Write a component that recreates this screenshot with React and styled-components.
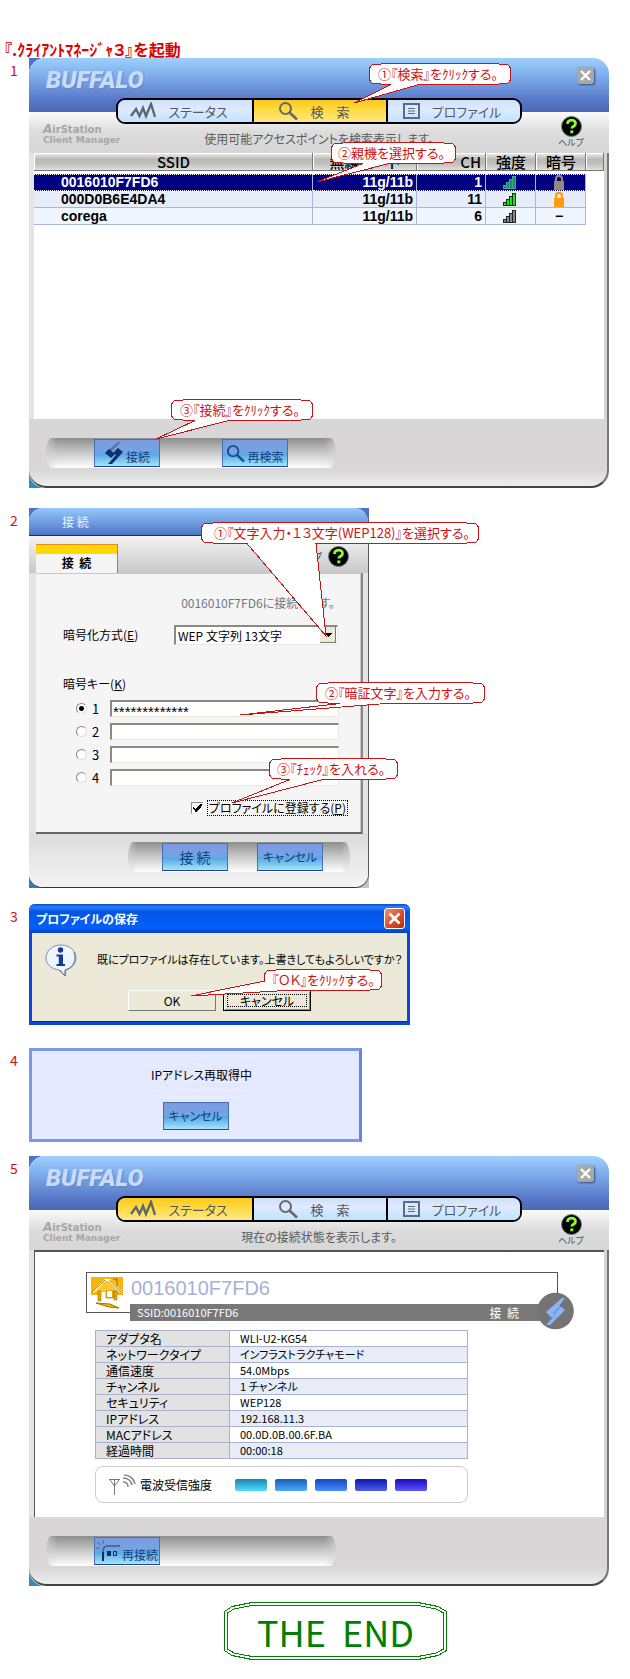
import React from "react";
import styled, { createGlobalStyle, css } from "styled-components";

const Global = createGlobalStyle`
  * { box-sizing: border-box; }
  body { margin: 0; background: #fff; }
  body, button, input, select {
    font-family: "Noto Sans CJK JP", "Liberation Sans", sans-serif;
    font-feature-settings: "palt";
  }
`;

/* ---------- page ---------- */

const Page = styled.main`
  padding: 40px 21px 20px 0;
  color: #000;
  font-size: 12px;
  line-height: 16px;
`;
const Title = styled.h1`
  margin: 0;
  padding-left: 4px;
  height: 18px;
  color: #e00000;
  font-size: 16px;
  line-height: 18px;
  white-space: nowrap;
`;
const StepRow = styled.section`
  display: flex;
  align-items: flex-start;
  margin-top: ${(p) => p.$gap || 0}px;
`;
const StepNumber = styled.span`
  flex: 0 0 29px;
  padding: 2px 0 0 10px;
  color: #d01010;
  font-size: 14px;
  line-height: 20px;
`;
const StepBody = styled.div`
  position: relative;
  flex: 1 1 auto;
  min-width: 0;
  max-width: ${(p) => (p.$max ? `${p.$max}px` : "none")};
`;

/* ---------- callouts ---------- */

const CalloutBox = styled.div`
  position: absolute;
  z-index: 5;
  left: ${(p) => p.$left};
  top: ${(p) => p.$top}px;
  width: ${(p) => p.$width}px;
  height: 22px;
  padding-left: ${(p) => p.$pad}px;
  color: #d01010;
  font-size: 13px;
  line-height: 22px;
  white-space: nowrap;
  pointer-events: none;
`;
const CalloutShape = styled.svg`
  position: absolute;
  left: 0;
  top: 0;
  overflow: visible;
  shape-rendering: crispEdges;
`;
const CalloutText = styled.span`
  position: relative;
`;

function Callout({ left, top, width, pad = 9, tip, base, side, children }) {
  const w = width;
  const [tx, ty] = tip;
  const tail = side
    ? `H${base[1]} L${tx} ${ty} L0.5 12`
    : `H${base[1]} L${tx} ${ty} L${base[0]} 21.5 H16 L3 20 L0.5 17`;
  const d = `M0.5 5 L3 2 L16 0.5 H${w - 16} L${w - 3} 2 L${w - 0.5} 5 V17 L${w - 3} 20 L${w - 16} 21.5 ${tail} Z`;
  return (
    <CalloutBox $left={left} $top={top} $width={w} $pad={pad}>
      <CalloutShape width={w} height="22" aria-hidden="true">
        <path d={d} fill="#fff" stroke="#c81414" />
      </CalloutShape>
      <CalloutText>{children}</CalloutText>
    </CalloutBox>
  );
}

/* ---------- client manager window ---------- */

const Shell = styled.div`
  background:
    linear-gradient(#4a74cc, #4a74cc) 0 0 / 16px 16px no-repeat,
    linear-gradient(#2f8fb8, #2f8fb8) 0 100% / 12px 18px no-repeat;
`;
const ShellInner = styled.div`
  overflow: hidden;
  border-radius: 16px;
  background: #dcdcdc;
`;
const Header = styled.header`
  display: grid;
  grid-template-columns: 87px 1fr 87px;
  grid-template-rows: 40px 26px 29px;
  background:
    linear-gradient(#9fd0fc 0, #84b4f0 14px, #6f97dc 28px, #5878c8 42px, #4a68b4 54px) 0 0 / 100% 54px no-repeat,
    linear-gradient(#fbfbfb 54px, #dcdcdc 74px, #d6d6d6);
`;
const Logo = styled.div`
  grid-column: 1 / 3;
  grid-row: 1;
  padding: 8px 0 0 17px;
  color: #c8dcfa;
  font: italic 900 24px/28px Roboto, "Liberation Sans", sans-serif;
  text-shadow: 1px 1px 1px #5f86cc;
`;
const CloseButton = styled.button`
  grid-column: 3;
  grid-row: 1;
  justify-self: end;
  width: 17px;
  height: 17px;
  margin: 9px 15px 0 0;
  padding: 0;
  border: 0;
  border-radius: 3px;
  background: #a8a8a8;
  box-shadow: 1px 1px 2px #334a88;
  svg { display: block; }
`;
const Tabs = styled.nav`
  grid-column: 2;
  grid-row: 2;
  display: grid;
  grid-template-columns: repeat(3, 1fr);
  border: 2px solid #000;
  border-radius: 9px;
  overflow: hidden;
`;
const Tab = styled.button`
  display: flex;
  align-items: center;
  justify-content: center;
  gap: 12px;
  padding: 0 12px 0 0;
  border: 0;
  border-left: 2px solid #000;
  color: #505860;
  font-size: 13px;
  white-space: pre;
  background: ${(p) =>
    p.$active
      ? "linear-gradient(#fcc81c, #ffd93c 40%, #ffe888)"
      : "linear-gradient(#cfe0fb, #dfeaff 40%, #bfe4ff)"};
  &:first-child { border-left: 0; }
  &:last-child { padding-right: 4px; }
`;
const Product = styled.div`
  grid-column: 1;
  grid-row: 3;
  padding: 0 0 0 14px;
  color: #a6a6a6;
  font: bold 9px/10px "DejaVu Sans", sans-serif;
  white-space: nowrap;
`;
const ProductName = styled.div`
  font-size: 10px;
  i { font-size: 12px; }
`;
const Message = styled.p`
  grid-column: 2;
  grid-row: 3;
  margin: 0;
  padding-top: 6px;
  color: #5a5a5a;
  font-size: 12px;
  line-height: 18px;
  text-align: center;
`;
const HelpLink = styled.a`
  grid-column: 3;
  grid-row: 2 / 4;
  justify-self: end;
  display: flex;
  flex-direction: column;
  align-items: center;
  width: 34px;
  margin: 18px 21px 0 0;
  color: #505050;
  font-size: 9px;
  line-height: 12px;
  text-decoration: none;
`;
const Body = styled.div`
  min-height: ${(p) => (p.$status ? 267 : 266)}px;
  margin: 0 3px 0 5px;
  background: #fff;
  box-shadow: 3px 0 0 #d4d4d4, 5px 0 0 #777;
  ${(p) =>
    p.$status &&
    css`
      margin-top: -1px;
      padding: 20px 30px 12px 51px;
      border-top: 2px solid #555;
      border-left: 1px solid #555;
    `}
`;
const ShellMiddle = styled.div`
  padding-right: 2px;
  background: linear-gradient(to right, #e4e4e4, #dcdcdc 98%, #777);
`;
const Footer = styled.footer`
  height: 69px;
  padding: 19px 0 0 17px;
  border-right: 2px solid #777;
  border-bottom: 2px solid #444;
  border-radius: 0 0 18px 18px;
  background: linear-gradient(#d8d6d7 50px, #eee);
`;
const Tray = styled.div`
  display: flex;
  gap: ${(p) => p.$gap}px;
  width: ${(p) => p.$width}px;
  height: 30px;
  padding: 1px 0 1px ${(p) => p.$pad}px;
  border-radius: 6px / 16px;
  background:
    linear-gradient(to right, rgba(216, 214, 215, 0.6), transparent 4%, transparent 96%, rgba(216, 214, 215, 0.6)),
    linear-gradient(#8e8e8e, #c4c4c4 45%, #fff);
`;
const SkinButton = styled.button`
  display: flex;
  align-items: center;
  justify-content: center;
  gap: 2px;
  width: 66px;
  height: 28px;
  padding: ${(p) => (p.$low ? "8px 0 0" : "0")};
  border: 1px solid #4470b4;
  border-bottom-color: #1d4a8c;
  color: #123f80;
  font-size: ${(p) => (p.$large ? 14 : 12)}px;
  line-height: 16px;
  white-space: pre;
  background: linear-gradient(#7c9ae0, #74a4e4 45%, #58a8e4 55%, #a4e4fc);
  svg { flex: none; margin-top: ${(p) => (p.$low ? -8 : 0)}px; }
`;

/* ---------- access point list ---------- */

const ApTable = styled.table`
  width: 100%;
  table-layout: fixed;
  border-collapse: separate;
  border-spacing: 0;
  font-weight: bold;
`;
const ApCol = styled.col`
  width: ${(p) => (p.$w ? `${p.$w}px` : "auto")};
`;
const ApHead = styled.th`
  height: 21px;
  padding: 0 5px;
  border-bottom: 3px solid #fff;
  background: linear-gradient(#f0f0ec, #b8b8b6 35%, #c0c0be 60%, #e4e4e0) padding-box;
  box-shadow: inset -1px -1px 0 #777, inset 1px 1px 0 #fff;
  font-size: 15px;
  font-weight: 500;
  line-height: 18px;
  text-align: ${(p) => p.$align || "center"};
  white-space: nowrap;
`;
const ApCell = styled.td`
  height: 17px;
  padding: ${(p) => (p.$name ? "0 0 0 27px" : "0 3px 0 0")};
  border-right: 1px solid #aab6dc;
  border-bottom: 1px solid #aab6dc;
  font: bold 14px/16px "Liberation Sans", sans-serif;
  text-align: ${(p) => (p.$name ? "left" : p.$center ? "center" : "right")};
  svg { display: block; margin: 0 auto; }
`;
const ApRow = styled.tr`
  color: ${(p) => (p.$selected ? "#fff" : "#000")};
  td {
    background: ${(p) => (p.$selected ? "#000080" : p.$alt ? "#f0f6ff" : "#e6ecf8")};
    ${(p) => p.$selected && "border-top: 1px dotted #fff; border-bottom: 1px dotted #fff; line-height: 15px;"}
  }
  td:last-child { background: #fff; border: 0; }
`;

/* ---------- connection dialog ---------- */

const Dialog = styled.div`
  background:
    linear-gradient(#4a74cc, #4a74cc) 0 0 / 100% 14px no-repeat,
    linear-gradient(#2f7fb0, #2f7fb0) 0 100% / 12px 12px no-repeat,
    linear-gradient(#c4c4c4, #c4c4c4) 100% 100% / 12px 12px no-repeat;
`;
const DialogInner = styled.div`
  overflow: hidden;
  border-right: 1px solid #555;
  border-bottom: 1px solid #333;
  border-radius: 14px;
  background: #e4e4e4;
`;
const DialogTitle = styled.h2`
  height: 28px;
  margin: 0;
  padding-left: 33px;
  border-bottom: 1px solid #1c2c5c;
  color: #e8f2ff;
  font-size: 12px;
  font-weight: 400;
  line-height: 27px;
  white-space: pre;
  background: linear-gradient(#94c8fc, #5076c8);
`;
const DialogTop = styled.div`
  display: flex;
  align-items: flex-end;
  justify-content: space-between;
  height: 37px;
  padding-left: 7px;
  background: linear-gradient(#f4f4f4, #c8c8c8);
`;
const DialogTab = styled.div`
  width: 82px;
  height: 29px;
  padding-top: 9px;
  border-top: 1px solid #e88c20;
  border-right: 1px solid #888;
  font-size: 12px;
  font-weight: bold;
  line-height: 18px;
  text-align: center;
  white-space: pre;
  background: linear-gradient(#ffd800 9px, #f5f5f5 9px);
`;
const DialogHelp = styled.a`
  display: flex;
  align-items: center;
  gap: 6px;
  padding: 0 19px 6px 0;
  color: #404040;
  font-size: 9px;
  line-height: 20px;
  text-decoration: none;
`;
const Sheet = styled.form`
  margin: 0 5px 0 7px;
  height: 261px;
  border-right: 2px solid #888;
  border-bottom: 2px solid #666;
  background: #f5f5f5;
  box-shadow: inset -1px 1px 0 #c8c8c8;
`;
const SheetNote = styled.p`
  margin: 0;
  padding: 20px 26px 0 0;
  height: 52px;
  color: #6c7888;
  font-size: 12px;
  line-height: 20px;
  text-align: right;
`;
const MethodRow = styled.div`
  display: grid;
  grid-template-columns: 111px 164px;
  align-items: center;
  padding-left: 27px;
  height: 20px;
`;
const SelectWrap = styled.div`
  display: grid;
  > * { grid-area: 1 / 1; }
  svg { justify-self: end; align-self: center; margin-right: 2px; pointer-events: none; }
`;
const sunken = css`
  border: 1px solid #eceadc;
  border-top: 2px solid #8c8a80;
  border-left: 2px solid #8c8a80;
  border-radius: 0;
  background: #fff;
`;
const Select = styled.select`
  appearance: none;
  width: 100%;
  height: 20px;
  padding: 0 18px 0 2px;
  ${sunken}
  color: #000;
  font-size: 12px;
  line-height: 16px;
`;
const KeyTitle = styled.div`
  padding: 30px 0 4px 27px;
  line-height: 18px;
`;
const KeyRow = styled.div`
  display: flex;
  align-items: center;
  height: 23px;
  padding-left: 40px;
`;
const Radio = styled.input`
  appearance: none;
  width: 11px;
  height: 11px;
  margin: 0;
  border: 1px solid #888;
  border-right-color: #ddd;
  border-bottom-color: #ddd;
  border-radius: 50%;
  background: #fff;
  &:checked { background: radial-gradient(#000 2px, #fff 3px); }
`;
const KeyLabel = styled.label`
  width: 23px;
  padding-left: 5px;
  font-size: 13px;
`;
const KeyInput = styled.input`
  width: 229px;
  height: 17px;
  padding: 4px 1px 0;
  ${sunken}
  font: 15px/12px "Liberation Sans", sans-serif;
`;
const CheckRow = styled.div`
  display: flex;
  align-items: center;
  justify-content: flex-end;
  gap: 5px;
  padding: 12px 14px 0 0;
`;
const CheckBox = styled.input`
  appearance: none;
  width: 12px;
  height: 12px;
  margin: 0;
  ${sunken}
  border-width: 1px;
  &:checked {
    background:
      linear-gradient(45deg, transparent 38%, #000 38%, #000 56%, transparent 56%) 1px 4px / 4px 5px no-repeat,
      linear-gradient(-45deg, transparent 40%, #000 40%, #000 62%, transparent 62%) 3px 1px / 7px 8px no-repeat,
      #fff;
  }
`;
const CheckLabel = styled.label`
  outline: 1px dotted #000;
  padding: 0 1px;
  line-height: 14px;
`;
const DialogFooter = styled.footer`
  height: 53px;
  padding: 8px 0 0 99px;
  background: linear-gradient(#dcdcdc, #f4f4f4);
`;

/* ---------- message box ---------- */

const XpWindow = styled.div`
  border: 3px solid #0a48d8;
  border-top: 0;
  border-radius: 6px 6px 0 0;
  background: #ece9d8;
  box-shadow: inset 0 -1px 0 #003080;
`;
const XpTitle = styled.header`
  display: flex;
  align-items: center;
  justify-content: space-between;
  height: 29px;
  margin: 0 -3px;
  padding: 0 5px 0 7px;
  border-radius: 6px 6px 0 0;
  color: #fff;
  font-size: 12px;
  font-weight: bold;
  background: linear-gradient(#0848c8, #2c80ff 3px, #0454e4 8px, #0460fc 24px, #0440b8);
`;
const XpClose = styled.button`
  width: 21px;
  height: 21px;
  padding: 0;
  border: 1px solid #fff;
  border-radius: 3px;
  background: linear-gradient(135deg, #f09070, #d84820 60%, #b83010);
  svg { display: block; }
`;
const XpMessage = styled.div`
  display: flex;
  align-items: flex-start;
  gap: 20px;
  height: 57px;
  padding: 11px 0 0 12px;
  svg { flex: none; }
  p { margin: 0; padding-top: 6px; font-size: 11px; line-height: 18px; white-space: nowrap; }
`;
const XpButtons = styled.div`
  display: flex;
  gap: 7px;
  padding: 0 0 11px 96px;
`;
const XpButton = styled.button`
  width: 88px;
  height: 21px;
  padding: 0;
  border: 1px solid #fff;
  border-right-color: #777;
  border-bottom-color: #777;
  color: #000;
  font-size: 12px;
  line-height: 16px;
  background: #ece9d8;
  ${(p) =>
    p.$focused &&
    css`
      border-color: #000;
      box-shadow: inset 1px 1px 0 #fff, inset -1px -1px 0 #888;
      outline: 1px dotted #000;
      outline-offset: -5px;
    `}
`;

/* ---------- renewing address ---------- */

const Renewing = styled.div`
  display: flex;
  flex-direction: column;
  align-items: center;
  gap: 18px;
  padding: 15px 0 9px;
  border: 3px solid #7898e8;
  border-right-color: #6484e4;
  background: repeating-linear-gradient(#e2e8fd 0 4px, #e6ebff 4px 8px);
  p { margin: 0; padding-left: 12px; line-height: 18px; font-size: 12px; }
`;

/* ---------- status ---------- */

const NetworkCard = styled.div`
  display: flex;
  gap: 8px;
  height: 41px;
  margin-right: 16px;
  padding: 4px;
  border: 1px solid #555;
`;
const NetworkName = styled.div`
  color: #a8b0d8;
  font: 20px/22px "Liberation Sans", sans-serif;
`;
const NetworkBar = styled.div`
  position: relative;
  display: flex;
  justify-content: space-between;
  height: 17px;
  margin: -9px 29px 9px 44px;
  padding: 0 26px 0 7px;
  color: #fff;
  font-size: 12px;
  line-height: 17px;
  white-space: pre;
  background: #787878;
  small { font-size: 11px; }
`;
const LinkBadge = styled.svg`
  position: absolute;
  right: -29px;
  top: -12px;
`;
const InfoTable = styled.table`
  width: 373px;
  max-width: 100%;
  margin-left: 9px;
  border-collapse: collapse;
  table-layout: fixed;
  font-size: 12px;
  line-height: 15px;
  th, td { height: 16px; padding: 0 0 0 10px; border: 1px solid #aab0d0; text-align: left; font-weight: 400; }
  th { width: 134px; background: #e2e2e2; }
  tr:nth-child(even) td { background: #e6ecf8; }
  td { font-size: 11px; }
`;
const SignalBox = styled.div`
  display: flex;
  align-items: center;
  width: 373px;
  max-width: 100%;
  height: 37px;
  margin: 7px 0 0 9px;
  padding-left: 12px;
  border: 1px solid #ccc;
  border-radius: 8px;
  span { width: 98px; padding-left: 3px; }
`;
const SignalBars = styled.div`
  display: flex;
  gap: 8px;
`;
const SignalBar = styled.i`
  width: 32px;
  height: 12px;
  border-radius: 2px;
  background: linear-gradient(${(p) => p.$dark}, ${(p) => p.$light});
`;

/* ---------- closing ---------- */

const Ending = styled.footer`
  display: flex;
  justify-content: center;
  margin-top: 16px;
  padding-left: 62px;
`;
const EndFrame = styled.div`
  display: grid;
  width: 223px;
  height: 58px;
  > * { grid-area: 1 / 1; }
  svg { shape-rendering: crispEdges; }
  strong {
    place-self: center;
    color: #008000;
    font-size: 36px;
    font-weight: 400;
    line-height: 56px;
    white-space: pre;
  }
`;

/* ---------- drawings ---------- */

const Cross = ({ size }) => (
  <svg width={size} height={size} viewBox="0 0 17 17" aria-hidden="true">
    <path d="M4 4l9 9M13 4l-9 9" stroke="#fff" strokeWidth="2.4" />
  </svg>
);
const Wave = () => (
  <svg width="26" height="18" viewBox="0 0 26 18" aria-hidden="true">
    <path d="M1 14L6 7l3.500 7 3.500-8 3 8 5-12 4 13" fill="none" stroke="#5c6870" strokeWidth="2.400" />
  </svg>
);
const Lens = ({ size = 20, color = "#66686a" }) => (
  <svg width={size} height={size} viewBox="0 0 20 20" aria-hidden="true">
    <circle cx="7.500" cy="7.500" r="5.500" fill="none" stroke={color} strokeWidth="2" />
    <path d="M11.500 11.500L19 18.500" stroke={color} strokeWidth="2.600" />
  </svg>
);
const Sheets = () => (
  <svg width="17" height="16" viewBox="0 0 17 16" aria-hidden="true">
    <path d="M1 1h15v14H1z" fill="none" stroke="#5a6c80" strokeWidth="2" />
    <path d="M5 5.500h7M5 8h7M5 10.500h7" stroke="#5a6c80" />
  </svg>
);
const HelpMark = () => (
  <svg width="21" height="21" viewBox="0 0 21 21" aria-hidden="true">
    <circle cx="10.500" cy="10.500" r="10" fill="#000" stroke="#777" />
    <path d="M6.500 8c0-5 8-5 8-.5 0 3-3.500 2.500-3.700 5" fill="none" stroke="#8f2" strokeWidth="2.800" />
    <path d="M9.300 14.500h3v2.800h-3z" fill="#8f2" />
  </svg>
);
const LinkMark = () => (
  <svg width="20" height="22" viewBox="0 0 20 22" aria-hidden="true">
    <path d="M14 0h3L9 8l-3 3-4-1z" fill="#60769a" />
    <path d="M1 11l4-4 6 5-4 4z" fill="#0c3070" />
    <path d="M12 8l2-2 5 4-11 12H4l8-9-3-2z" fill="#0c3070" />
  </svg>
);
const Reconnect = () => (
  <svg width="24" height="24" viewBox="0 0 24 24" aria-hidden="true">
    <path d="M7 22V12c0-3 2-5 5-5h12" fill="none" stroke="#4a6a98" strokeWidth="2" />
    <path d="M7 22V13" stroke="#0c2c60" strokeWidth="2" />
    <path d="M1 3l4 3M7 1v4M0 9h4" stroke="#4a6a98" />
    <path d="M11 12h4v5h-4z" fill="#0c2c60" />
    <path d="M17.500 12.500h3v4h-3z" fill="none" stroke="#0c2c60" />
  </svg>
);
const Bars = ({ fill, line }) => (
  <svg width="13" height="13" viewBox="0 0 13 13" shapeRendering="crispEdges" aria-hidden="true">
    <path d="M.5 9.500h3v3h-3zM3.500 6.500h3v6h-3zM6.500 3.500h3v9h-3zM9.500 .5h3v12h-3z" fill={fill} stroke={line} />
  </svg>
);
const Lock = ({ color }) => (
  <svg width="12" height="15" viewBox="0 0 12 15" aria-hidden="true">
    <path d="M3 7V3.500c0-3.500 6-3.500 6 0V7" fill="none" stroke={color} strokeWidth="2" />
    <path d="M1 6h10v9H1z" fill={color} />
  </svg>
);
const DropArrow = () => (
  <svg width="16" height="16" viewBox="0 0 16 16" shapeRendering="crispEdges" aria-hidden="true">
    <path d="M0 0h16v16H0z" fill="#ece9d8" />
    <path d="M15.500 0v15.500H0" fill="none" stroke="#777" />
    <path d="M5 6h7L8.500 10z" />
  </svg>
);
const InfoMark = () => (
  <svg width="33" height="33" viewBox="0 0 33 33" aria-hidden="true">
    <path d="M17 1c9 0 15 6 15 13 0 6-4 10-10 12l-1 6-6-6C7 25 2 20 2 14 2 7 8 1 17 1z" fill="#f0f4fc" stroke="#7890b8" />
    <path d="M30 8c3 8-1 16-9 18l0 6-5-6" fill="none" stroke="#5c6c94" />
    <circle cx="16.500" cy="6" r="2.700" fill="#103c98" />
    <path d="M12.500 10.500h6.500v9.500h2v2h-8.500v-2h2.300v-7.500h-2.300z" fill="#103c98" />
  </svg>
);
const House = () => (
  <svg width="32" height="32" viewBox="0 0 32 32" aria-hidden="true">
    <path d="M0 0h32v18H0z" fill="#f8b408" />
    <path d="M7 14h18v9H7z" fill="#fff" />
    <path d="M2 15L14 3h5l11 12" fill="#fcc830" stroke="#fff" strokeWidth="2" />
    <path d="M1 15L14 3M19 3l11 12M22 2h4v7" fill="none" stroke="#9c7408" />
    <path d="M7 14h3v10H7zM23 14h3v9h-3zM15 14h8v7h-8z" fill="#e8a808" stroke="#9c7408" strokeWidth=".6" />
    <path d="M16 14h5v6h-5z" fill="#fff" />
    <path d="M5 26l14 1 9 4-10-1z" fill="#f8b408" stroke="#9c7408" />
  </svg>
);
const Antenna = () => (
  <svg width="29" height="24" viewBox="0 0 29 24" aria-hidden="true">
    <path d="M6.500 6v16M1 6.500h11M2 7l4.500 6L11 7" fill="none" stroke="#777" />
    <path d="M15 9c3 0 5 2 5 5M15 5c5 0 8 3 9 7M16 2c6 0 10 4 11 9" fill="none" stroke="#888" strokeWidth="1.600" />
  </svg>
);

/* ---------- composed parts ---------- */

const tabs = [
  ["status", "ステータス", <Wave key="w" />],
  ["search", "検　索", <Lens key="l" />],
  ["profile", "プロファイル", <Sheets key="s" />],
];

function ManagerWindow({ active, message, status, tray, children }) {
  return (
    <Shell>
      <ShellInner>
        <Header>
          <Logo>BUFFALO</Logo>
          <CloseButton aria-label="閉じる"><Cross size={17} /></CloseButton>
          <Tabs>
            {tabs.map(([id, label, icon]) => (
              <Tab key={id} $active={id === active}>{icon}{label}</Tab>
            ))}
          </Tabs>
          <Product>
            <ProductName><i>A</i>irStation</ProductName>
            Client Manager
          </Product>
          <Message>{message}</Message>
          <HelpLink href="#help"><HelpMark />ヘルプ</HelpLink>
        </Header>
        <ShellMiddle>
          <Body $status={status}>{children}</Body>
        </ShellMiddle>
        <Footer>
          <Tray $width={290} $gap={62} $pad={48}>{tray}</Tray>
        </Footer>
      </ShellInner>
    </Shell>
  );
}

const points = [
  { ssid: "0016010F7FD6", mode: "11g/11b", ch: 1, bars: ["#208870", "#40a890"], lock: "#988878" },
  { ssid: "000D0B6E4DA4", mode: "11g/11b", ch: 11, bars: ["#20e020", "#103010"], lock: "#ff9c08" },
  { ssid: "corega", mode: "11g/11b", ch: 6, bars: ["#888", "#222"], lock: null },
];

const info = [
  ["アダプタ名", "WLI-U2-KG54"],
  ["ネットワークタイプ", "インフラストラクチャモード"],
  ["通信速度", "54.0Mbps"],
  ["チャンネル", "1 チャンネル"],
  ["セキュリティ", "WEP128"],
  ["IPアドレス", "192.168.11.3"],
  ["MACアドレス", "00.0D.0B.00.6F.BA"],
  ["経過時間", "00:00:18"],
];

const strength = [
  ["#1884b0", "#50dcff"],
  ["#1460b8", "#50a8ff"],
  ["#1048c0", "#4c8cff"],
  ["#0c18b0", "#4c5cf0"],
  ["#2008c0", "#5858f8"],
];

export default function App() {
  return (
    <Page>
      <Global />
      <Title>『.ｸﾗｲｱﾝﾄﾏﾈｰｼﾞｬ３』を起動</Title>

      <StepRow>
        <StepNumber>1</StepNumber>
        <StepBody>
          <ManagerWindow
            active="search"
            message="使用可能アクセスポイントを検索表示します。"
            tray={
              <>
                <SkinButton $low><LinkMark />接続</SkinButton>
                <SkinButton $low><Lens size={19} color="#1c4c90" />再検索</SkinButton>
              </>
            }
          >
            <ApTable>
              <colgroup>
                <ApCol />
                <ApCol $w={104} />
                <ApCol $w={69} />
                <ApCol $w={50} />
                <ApCol $w={50} />
                <ApCol $w={18} />
              </colgroup>
              <thead>
                <tr>
                  <ApHead>SSID</ApHead>
                  <ApHead>無線モード</ApHead>
                  <ApHead $align="right">CH</ApHead>
                  <ApHead>強度</ApHead>
                  <ApHead>暗号</ApHead>
                  <ApHead aria-hidden="true" />
                </tr>
              </thead>
              <tbody>
                {points.map((p, i) => (
                  <ApRow key={p.ssid} $selected={i === 0} $alt={i === 2}>
                    <ApCell $name>{p.ssid}</ApCell>
                    <ApCell>{p.mode}</ApCell>
                    <ApCell>{p.ch}</ApCell>
                    <ApCell $center><Bars fill={p.bars[0]} line={p.bars[1]} /></ApCell>
                    <ApCell $center>{p.lock ? <Lock color={p.lock} /> : "−"}</ApCell>
                    <ApCell />
                  </ApRow>
                ))}
              </tbody>
            </ApTable>
          </ManagerWindow>
          <Callout left="calc(50% + 50px)" top={5} width={142} tip={[-15, 40]} base={[22, 50]}>
            ①『検索』をｸﾘｯｸする。
          </Callout>
          <Callout left="calc(50% + 12px)" top={84} width={125} pad={7} tip={[-14, 40]} base={[32, 58]}>
            ②親機を選択する。
          </Callout>
          <Callout left="142px" top={341} width={142} tip={[-15, 40]} base={[24, 58]}>
            ③『接続』をｸﾘｯｸする。
          </Callout>
        </StepBody>
      </StepRow>

      <StepRow $gap={20}>
        <StepNumber>2</StepNumber>
        <StepBody $max={340}>
          <Dialog>
            <DialogInner>
              <DialogTitle>接 続</DialogTitle>
              <DialogTop>
                <DialogTab>接  続</DialogTab>
                <DialogHelp href="#help">ヘルプ<HelpMark /></DialogHelp>
              </DialogTop>
              <Sheet>
                <SheetNote>0016010F7FD6に接続します。</SheetNote>
                <MethodRow>
                  <label htmlFor="method">暗号化方式(<u>E</u>)</label>
                  <SelectWrap>
                    <Select id="method"><option>WEP 文字列 13文字</option></Select>
                    <DropArrow />
                  </SelectWrap>
                </MethodRow>
                <KeyTitle>暗号キー(<u>K</u>)</KeyTitle>
                {[1, 2, 3, 4].map((n) => (
                  <KeyRow key={n}>
                    <Radio type="radio" name="key" id={`key${n}`} defaultChecked={n === 1} />
                    <KeyLabel htmlFor={`key${n}`}>{n}</KeyLabel>
                    <KeyInput aria-label={`暗号キー ${n}`} defaultValue={n === 1 ? "*************" : ""} />
                  </KeyRow>
                ))}
                <CheckRow>
                  <CheckBox type="checkbox" id="save" defaultChecked />
                  <CheckLabel htmlFor="save">プロファイルに登録する(<u>P</u>)</CheckLabel>
                </CheckRow>
              </Sheet>
              <DialogFooter>
                <Tray $width={222} $gap={29} $pad={34}>
                  <SkinButton $large>接 続</SkinButton>
                  <SkinButton>キャンセル</SkinButton>
                </Tray>
              </DialogFooter>
            </DialogInner>
          </Dialog>
          <Callout left="172px" top={14} width={278} pad={13} tip={[125, 114]} base={[46, 115]}>
            ①『文字入力・１３文字(WEP128)』を選択する。
          </Callout>
          <Callout left="287px" top={174} width={169} tip={[-76, 33]} base={[24, 70]}>
            ②『暗証文字』を入力する。
          </Callout>
          <Callout left="240px" top={250} width={129} pad={8} tip={[-37, 45]} base={[21, 54]}>
            ③『ﾁｪｯｸ』を入れる。
          </Callout>
        </StepBody>
      </StepRow>

      <StepRow $gap={16}>
        <StepNumber>3</StepNumber>
        <StepBody $max={381}>
          <XpWindow>
            <XpTitle>
              プロファイルの保存
              <XpClose aria-label="閉じる"><Cross size={19} /></XpClose>
            </XpTitle>
            <XpMessage>
              <InfoMark />
              <p>既にプロファイルは存在しています。上書きしてもよろしいですか？</p>
            </XpMessage>
            <XpButtons>
              <XpButton>OK</XpButton>
              <XpButton $focused>キャンセル</XpButton>
            </XpButtons>
          </XpWindow>
          <Callout side left="235px" top={65} width={118} pad={8} tip={[-73, 27]} base={[0, 22]}>
            『ＯＫ』をｸﾘｯｸする。
          </Callout>
        </StepBody>
      </StepRow>

      <StepRow $gap={23}>
        <StepNumber>4</StepNumber>
        <StepBody $max={333}>
          <Renewing>
            <p>IPアドレス再取得中</p>
            <SkinButton>キャンセル</SkinButton>
          </Renewing>
        </StepBody>
      </StepRow>

      <StepRow $gap={14}>
        <StepNumber>5</StepNumber>
        <StepBody>
          <ManagerWindow
            status
            active="status"
            message="現在の接続状態を表示します。"
            tray={<SkinButton $low><Reconnect />再接続</SkinButton>}
          >
            <NetworkCard>
              <House />
              <NetworkName>0016010F7FD6</NetworkName>
            </NetworkCard>
            <NetworkBar>
              <small>SSID:0016010F7FD6</small>
              <span>接  続</span>
              <LinkBadge width="37" height="38" viewBox="0 0 37 38" aria-hidden="true">
                <circle cx="18.500" cy="19" r="18.300" fill="#747474" />
                <path d="M25 6L9 20l6 6 5-5-2-2L28 6z" fill="#8cb4f8" />
                <path d="M9 33h4l15-15-6-5-4 6 2 2z" fill="#8cb4f8" />
                <path d="M16 22l8-8" stroke="#587cc0" />
              </LinkBadge>
            </NetworkBar>
            <InfoTable>
              <tbody>
                {info.map(([k, v]) => (
                  <tr key={k}><th scope="row">{k}</th><td>{v}</td></tr>
                ))}
              </tbody>
            </InfoTable>
            <SignalBox>
              <Antenna />
              <span>電波受信強度</span>
              <SignalBars>
                {strength.map(([dark, light]) => (
                  <SignalBar key={dark} $dark={dark} $light={light} />
                ))}
              </SignalBars>
            </SignalBox>
          </ManagerWindow>
        </StepBody>
      </StepRow>

      <Ending>
        <EndFrame>
          <svg width="223" height="58" fill="none" stroke="#008000" aria-hidden="true">
            <path d="M.5 9.500L8 4.500 28 .5H194L214 4.500 222.500 9.500V48.500L214 53.500 194 57.500H28L8 53.500 .5 48.500z" />
            <path d="M3.500 11L10 7 28 3.500H194L212 7 219.500 11V47L212 51 194 54.500H28L10 51 3.500 47z" />
          </svg>
          <strong>THE  END</strong>
        </EndFrame>
      </Ending>
    </Page>
  );
}
